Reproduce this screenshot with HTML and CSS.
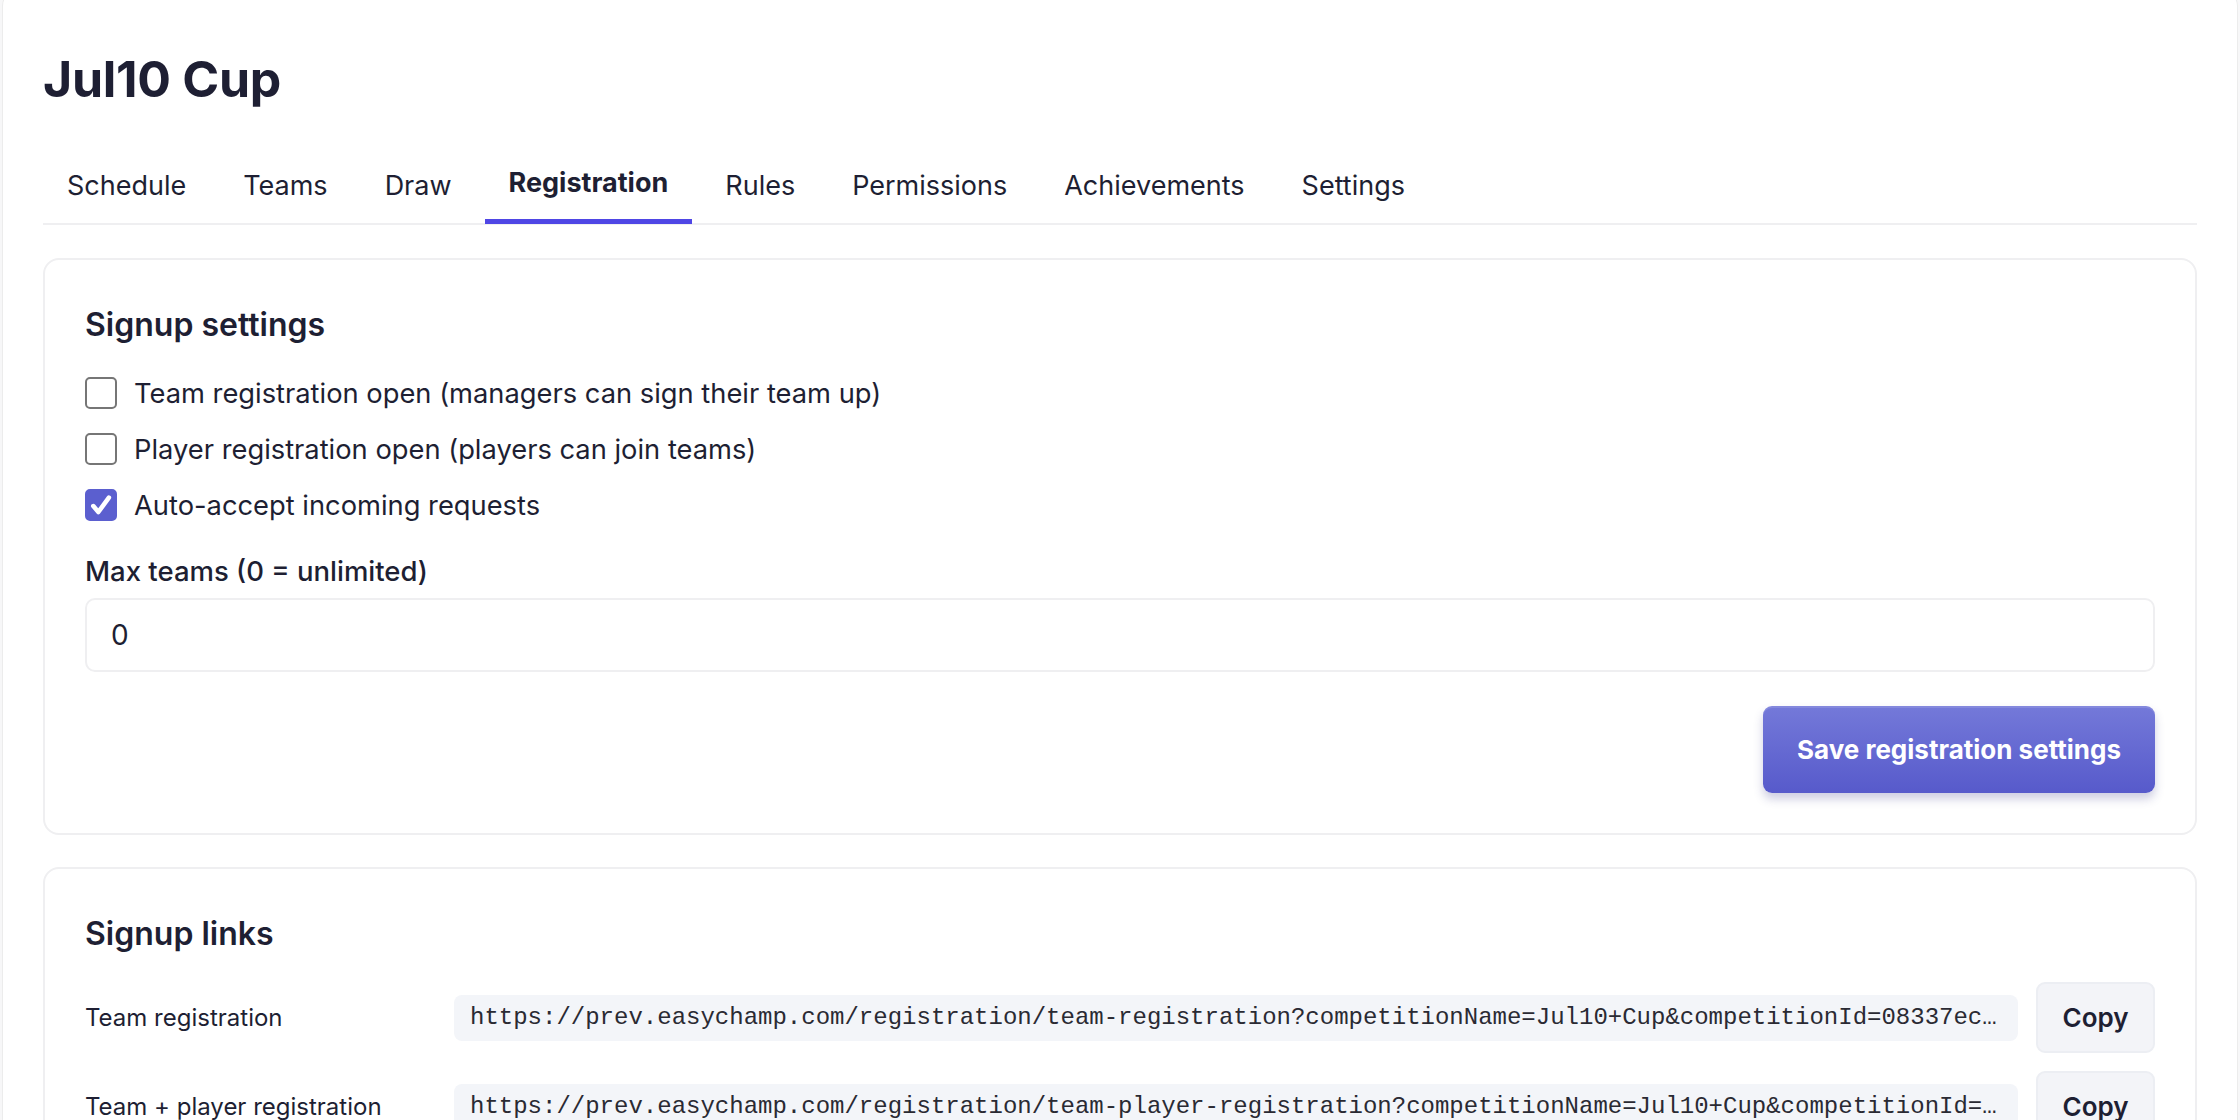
FILE: index.html
```html
<!DOCTYPE html>
<html lang="en">
<head>
  <meta charset="UTF-8" />
  <meta name="viewport" content="width=device-width, initial-scale=1.0"/>
  <title>Jul10 Cup - Registration</title>
  <link rel="stylesheet" href="styles.css">
</head>
<body>
  <div class="page">
    <h1 class="title">Jul10 Cup</h1>

    <nav class="tabs">
      <a class="tab">Schedule</a>
      <a class="tab">Teams</a>
      <a class="tab">Draw</a>
      <a class="tab active">Registration</a>
      <a class="tab">Rules</a>
      <a class="tab">Permissions</a>
      <a class="tab">Achievements</a>
      <a class="tab">Settings</a>
    </nav>

    <div class="card">
      <h2>Signup settings</h2>
      <div class="checks">
        <label class="check-row">
          <span class="box"></span>
          Team registration open (managers can sign their team up)
        </label>
        <label class="check-row">
          <span class="box"></span>
          Player registration open (players can join teams)
        </label>
        <label class="check-row">
          <span class="box checked">
            <svg viewBox="0 0 16 16" width="28" height="28"><path d="M3.6 8.6l2.9 3.4 6-8.2" fill="none" stroke="#fff" stroke-width="2.6" stroke-linecap="round" stroke-linejoin="round"/></svg>
          </span>
          Auto-accept incoming requests
        </label>
      </div>
      <div class="field-label">Max teams (0 = unlimited)</div>
      <div class="input">0</div>
      <div class="actions">
        <button class="primary">Save registration settings</button>
      </div>
    </div>

    <div class="card links-card">
      <h2>Signup links</h2>
      <div class="links">
        <div class="link-label">Team registration</div>
        <div class="url">https://prev.easychamp.com/registration/team-registration?competitionName=Jul10+Cup&amp;competitionId=08337ec4f2a1</div>
        <button class="copy">Copy</button>

        <div class="link-label">Team + player registration</div>
        <div class="url">https://prev.easychamp.com/registration/team-player-registration?competitionName=Jul10+Cup&amp;competitionId=08337ec4f2a1</div>
        <button class="copy">Copy</button>
      </div>
    </div>
  </div>
</body>
</html>
```

FILE: styles.css
```css
* {
  box-sizing: border-box;
}

body {
  margin: 0;
  background: #f7f7f8;
  font-family: Inter, "Noto Sans", sans-serif;
  color: #1e1f33;
  overflow: hidden;
}

.page {
  margin: -12px 2px 0 2px;
  padding: 0 40px 40px 40px;
  background: #fff;
  border: 1px solid #ececec;
  border-radius: 18px;
  min-height: 1200px;
}

.title {
  margin: 60px 0 0 0;
  font-size: 50px;
  line-height: 60px;
  font-weight: 700;
  letter-spacing: -0.3px;
}

.tabs {
  display: flex;
  gap: 9px;
  margin-top: 45px;
  border-bottom: 2px solid #efeff1;
}

.tab {
  padding: 14px 24px 15px 24px;
  font-size: 27px;
  line-height: 36px;
  font-weight: 400;
  color: #1e1f33;
  border-bottom: 5px solid transparent;
  margin-bottom: -1px;
}

.tab.active {
  font-weight: 650;
  border-bottom-color: #4f46e5;
  margin-top: -3px;
  padding-bottom: 18px;
}

.card {
  margin-top: 33px;
  border: 2px solid #efeff1;
  border-radius: 16px;
  padding: 45px 40px 40px 40px;
  display: flex;
  flex-direction: column;
}

.links-card {
  margin-top: 32px;
}

.card h2 {
  margin: 0;
  font-size: 32px;
  line-height: 40px;
  font-weight: 600;
}

.checks {
  margin-top: 20px;
  display: flex;
  flex-direction: column;
}

.check-row {
  display: flex;
  align-items: center;
  gap: 17px;
  height: 56px;
  font-size: 27.3px;
}

.box {
  width: 32px;
  height: 32px;
  border: 2px solid #767676;
  border-radius: 5px;
  background: #fff;
  display: flex;
  align-items: center;
  justify-content: center;
  flex-shrink: 0;
}

.box.checked {
  background: #5b5fcf;
  border-color: #5b5fcf;
}

.field-label {
  margin-top: 18px;
  font-size: 27.5px;
  line-height: 40px;
  font-weight: 500;
}

.input {
  margin-top: 7px;
  height: 74px;
  border: 2px solid #efeff1;
  border-radius: 10px;
  padding: 0 24px;
  display: flex;
  align-items: center;
  font-size: 28px;
}

.actions {
  display: flex;
  justify-content: flex-end;
  margin-top: 34px;
}

.primary {
  height: 87px;
  width: 392px;
  border: none;
  border-radius: 9px;
  background: linear-gradient(#7479d9, #575acb);
  color: #fff;
  font-family: Inter, sans-serif;
  font-size: 26px;
  font-weight: 700;
  box-shadow: 0 6px 10px rgba(60, 60, 140, 0.25), inset 0 2px 0 rgba(255, 255, 255, 0.12);
}

.links {
  margin-top: 28px;
  display: grid;
  grid-template-columns: 351px 1fr 119px;
  column-gap: 18px;
  row-gap: 18px;
  align-items: center;
}

.link-label {
  font-size: 24px;
}

.url {
  height: 46px;
  background: #f3f5f9;
  border-radius: 8px;
  padding: 0 16px;
  font-family: "Liberation Mono", monospace;
  font-size: 24px;
  line-height: 46px;
  color: #2a2a33;
  white-space: nowrap;
  overflow: hidden;
  text-overflow: ellipsis;
}

.copy {
  height: 71px;
  background: #f3f4f8;
  border: 2px solid #eceef3;
  border-radius: 9px;
  font-family: Inter, sans-serif;
  font-size: 26px;
  font-weight: 600;
  color: #1e1f33;
}
```
